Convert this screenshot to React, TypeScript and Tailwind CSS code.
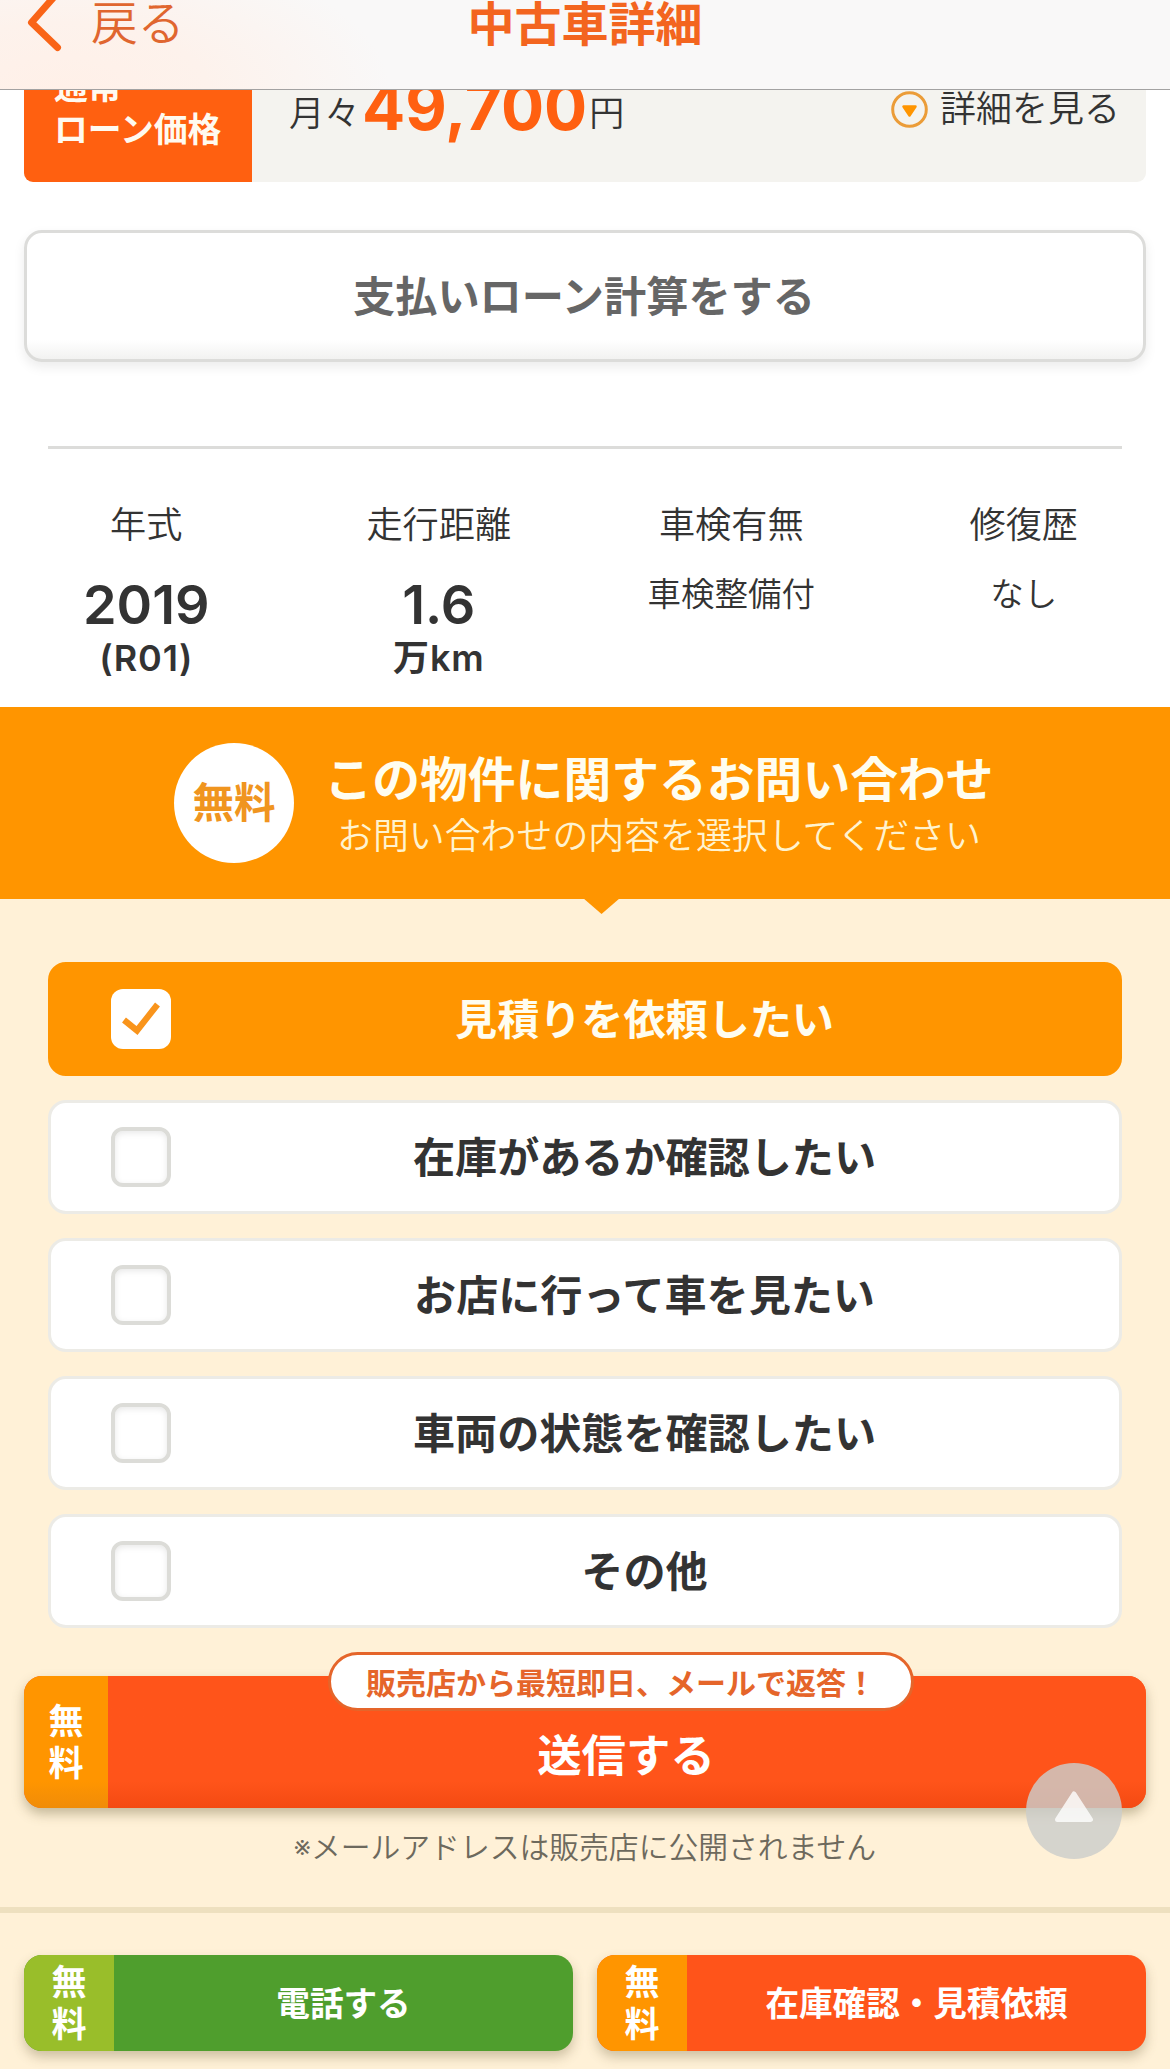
import React, { useState } from "react";

const stats = [
  { label: "年式", value: "2019", unit: "(R01)" },
  { label: "走行距離", value: "1.6", unit: "万km" },
  { label: "車検有無", text: "車検整備付" },
  { label: "修復歴", text: "なし" },
];

const inquiries = [
  "見積りを依頼したい",
  "在庫があるか確認したい",
  "お店に行って車を見たい",
  "車両の状態を確認したい",
  "その他",
];

const Header = () => (
  <header className="relative z-10 h-[90px] border-b border-[#a3a2a2] bg-[#f9f8f8] bg-[radial-gradient(ellipse_330px_150px_at_60px_90px,#fff0e8_0%,#fdf2ec_45%,#f9f8f8_100%)] flex items-start justify-center">
    <button className="absolute left-0 top-0 flex items-start text-[#e0662f]">
      <svg width="91" height="56" viewBox="0 0 91 56" fill="none" className="shrink-0">
        <path d="M57.5 -7L31.5 22.5L57.5 47.5" stroke="#f96417" strokeWidth="7" strokeLinecap="round" strokeLinejoin="round" />
      </svg>
      <span className="text-[46.8px] leading-[46px] font-[350]">戻る</span>
    </button>
    <h1 className="text-[47px] leading-[47px] font-bold text-[#f3651f]">中古車詳細</h1>
  </header>
);

const LoanPrice = () => (
  <div className="mx-6 h-[92px] flex items-end overflow-hidden rounded-b-[9px] bg-[#f4f3ef]">
    <div className="w-[228px] h-full shrink-0 flex flex-col justify-end bg-[#ff6010] pl-[30px] pb-[31px] text-[33.8px] leading-[43px] font-bold text-[#fffaf0]">
      <span>通常</span>
      <span>ローン価格</span>
    </div>
    <div className="flex h-full flex-1 items-end pl-[37px] pr-[26px] text-[#333]">
      <div className="flex items-baseline pb-[34px] leading-[60px] font-[350]">
        <span className="-translate-y-1 text-[35.5px]">月々</span>
        <span className="font-[Inter] ml-[2px] text-[64px] font-bold text-[#ff6010]">49,700</span>
        <span className="-translate-y-1 ml-[2px] text-[35px]">円</span>
      </div>
      <div className="ml-auto flex items-center gap-[12px] pb-[53px]">
        <svg width="37" height="37" viewBox="0 0 37 37" fill="none">
          <circle cx="18.5" cy="18.5" r="16.8" stroke="#eb9c38" strokeWidth="3" />
          <path d="M12.5 15.5h12l-6 9z" fill="#ff9500" stroke="#ff9500" strokeWidth="2.5" strokeLinejoin="round" />
        </svg>
        <span className="text-[36px] leading-[40px] font-[350]">詳細を見る</span>
      </div>
    </div>
  </div>
);

const CheckBox: React.FC<{ checked: boolean }> = ({ checked }) =>
  checked ? (
    <span className="flex size-[60px] items-center justify-center rounded-[12px] bg-white">
      <svg width="60" height="60" viewBox="0 0 60 60" fill="none">
        <path d="M13 31L26 41.5L46.5 15.5" stroke="#f9941b" strokeWidth="6.2" />
      </svg>
    </span>
  ) : (
    <span className="size-[60px] rounded-[12px] border-4 border-[#dcdcd8] bg-white shadow-[inset_0_2px_6px_#e8e8e8]" />
  );

interface ActionProps {
  label: string;
  className: string;
  tagClassName: string;
}

const BottomAction: React.FC<ActionProps> = ({ label, className, tagClassName }) => (
  <button className={`flex h-[96px] flex-1 overflow-hidden rounded-[18px] text-white font-bold shadow-[0_6px_12px_rgba(90,80,40,0.3)] ${className}`}>
    <span className={`flex h-full w-[90px] flex-col items-center justify-center text-[35px] leading-[42px] ${tagClassName}`}>
      <span>無</span>
      <span>料</span>
    </span>
    <span className="flex h-full flex-1 items-center justify-center pt-[2px] text-[33.6px]">{label}</span>
  </button>
);

const App: React.FC = () => {
  const [selected, setSelected] = useState(0);

  return (
    <div className="h-[2069px] w-[1170px] overflow-hidden bg-white font-['Inter','Noto_Sans_CJK_JP',sans-serif] text-[#333]" lang="ja">
      <Header />
      <LoanPrice />

      <div className="px-6 pt-[48px]">
        <button className="flex h-[132px] w-full items-center justify-center rounded-[18px] border-[3px] border-[#dcdcda] bg-linear-to-b from-white from-85% to-[#f2f2f1] pt-[2px] pr-[2px] text-[42.2px] font-bold text-[#666] shadow-[0_5px_12px_rgba(0,0,0,0.08)]">
          支払いローン計算をする
        </button>
      </div>
      <div className="mx-12 mt-[84px] h-[3px] bg-[#dcdcda]" />

      <div className="grid h-[258px] grid-cols-4 pt-[52px] text-center">
        {stats.map((stat) => (
          <div key={stat.label}>
            <p className="text-[36.2px] leading-[48px] font-[350]">{stat.label}</p>
            {stat.value ? (
              <>
                <p className="mt-[26px] text-[54px] leading-[60px] font-semibold">{stat.value}</p>
                <p className="text-[36px] leading-[46px] font-semibold tracking-[0.8px]">{stat.unit}</p>
              </>
            ) : (
              <p className="mt-[22px] text-[33.5px] leading-[46px] font-[350]">{stat.text}</p>
            )}
          </div>
        ))}
      </div>

      <div className="relative flex h-[192px] items-center bg-[#ff9500] pl-[174px]">
        <div className="flex size-[120px] items-center justify-center rounded-full bg-white text-[41.5px] font-bold text-[#f0951f]">
          無料
        </div>
        <div className="ml-[29px] w-[672px] pt-[8px] text-center text-[#fffdf0]">
          <p className="whitespace-nowrap text-[47.8px] leading-[58px] font-bold">この物件に関するお問い合わせ</p>
          <p className="whitespace-nowrap text-[35.9px] leading-[54px] font-[350] text-[#fff3cf]">お問い合わせの内容を選択してください</p>
        </div>
        <svg className="absolute left-[583px] top-[191px]" width="37" height="16" viewBox="0 0 37 16">
          <path d="M0 0H37L18.5 16z" fill="#ff9500" />
        </svg>
      </div>

      <div className="bg-[#fff1d7] pt-[63px]">
        <div className="flex flex-col gap-6 px-12">
          {inquiries.map((text, index) => (
            <button
              key={text}
              onClick={() => setSelected(index)}
              className={`flex h-[114px] items-center rounded-[18px] border-[3px] pl-[60px] text-[42.1px] font-bold ${
                selected === index
                  ? "border-[#ff9500] bg-[#ff9500] text-[#fffdf0]"
                  : "border-[#ecebe6] bg-white text-[#333]"
              }`}
            >
              <CheckBox checked={selected === index} />
              <span className="flex-1 pt-px pr-px text-center">{text}</span>
            </button>
          ))}
        </div>

        <div className="relative mx-6 mt-12">
          <button className="flex h-[132px] w-full overflow-hidden rounded-[18px] bg-[#ff541a] font-bold text-white shadow-[0_6px_12px_rgba(90,80,40,0.35)]">
            <span className="flex h-full w-[84px] flex-col items-center justify-center bg-linear-to-b from-[#ff9500] from-80% to-[#f08c08] text-[35px] leading-[42px]">
              <span>無</span>
              <span>料</span>
            </span>
            <span className="flex h-full flex-1 items-center justify-center bg-linear-to-b from-[#ff541a] from-80% to-[#f44a12] pt-[29px] pr-[2px] text-[44.4px]">
              送信する
            </span>
          </button>
          <span className="absolute left-[304px] -top-[24px] flex h-[59px] w-[586px] items-center justify-center whitespace-nowrap rounded-full border-[3px] border-[#e5652a] bg-white pt-[3px] text-[30px] leading-[40px] font-bold text-[#e5652a]">
            販売店から最短即日、メールで返答！
          </span>
          <button className="absolute right-6 top-[87px] flex size-[96px] items-center justify-center rounded-full bg-[rgba(204,205,203,0.82)]">
            <svg width="40" height="32" viewBox="0 0 40 32" className="-mt-[8px]">
              <path d="M20 3L36.5 28.5H3.5z" fill="#fff" stroke="#fff" strokeWidth="5" strokeLinejoin="round" opacity="0.8" />
            </svg>
          </button>
        </div>

        <p className="mt-[16px] text-center text-[29.8px] leading-[46px] font-[350] text-[#6d695d]">
          ※メールアドレスは販売店に公開されません
        </p>

        <div className="mt-[37px] flex h-[162px] gap-6 border-t-[6px] border-[#eee0bf] px-6 pt-[42px]">
          <BottomAction label="電話する" className="bg-[#4f9e2d]" tagClassName="bg-[#99be2a]" />
          <BottomAction label="在庫確認・見積依頼" className="bg-[#ff541a]" tagClassName="bg-[#ff9500]" />
        </div>
      </div>
    </div>
  );
};

export default App;
